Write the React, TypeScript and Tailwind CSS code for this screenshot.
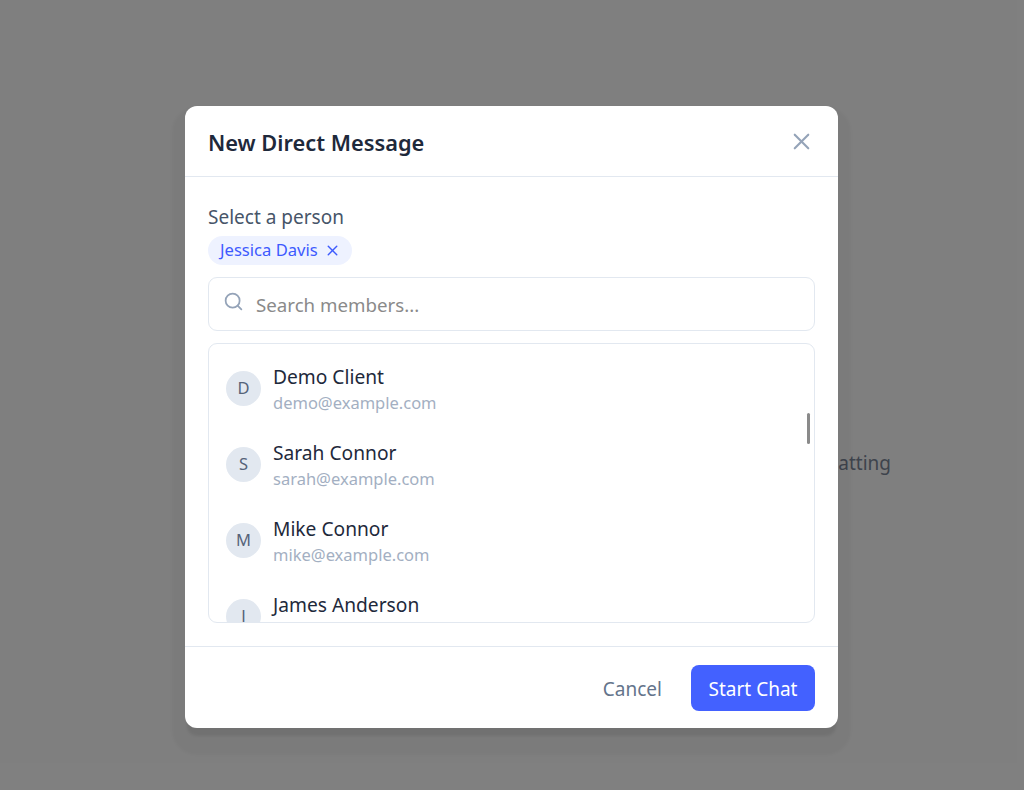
import React from 'react';
import { X, Search } from 'lucide-react';

const members = [
  { initial: 'D', name: 'Demo Client', email: 'demo@example.com' },
  { initial: 'S', name: 'Sarah Connor', email: 'sarah@example.com' },
  { initial: 'M', name: 'Mike Connor', email: 'mike@example.com' },
  { initial: 'J', name: 'James Anderson', email: 'james@example.com' },
];

const MemberRow = ({ initial, name, email }: { initial: string; name: string; email: string }) => (
  <div className="flex items-center gap-3 h-[76px] shrink-0 px-[17px]">
    <div className="w-[35px] h-[35px] rounded-full bg-[#e2e8f0] flex items-center justify-center text-[16.5px] text-[#566379] shrink-0">
      {initial}
    </div>
    <div className="flex flex-col pt-[3px]">
      <span className="text-[19.2px] leading-[26px] text-[#1e293b]">{name}</span>
      <span className="mt-[1px] text-[16.5px] leading-[24px] text-[#a3afc2]">{email}</span>
    </div>
  </div>
);

export default function App() {
  return (
    <div className="relative h-[790px] w-[1024px] overflow-hidden bg-white font-['Noto_Sans',sans-serif]">
      {/* page behind the dialog */}
      <div className="h-full flex items-center justify-end pr-[133px] pt-[136px]">
        <p className="text-[19px] text-[#7c8799]">Select a conversation to start chatting</p>
      </div>

      <div className="absolute inset-0 bg-black/50 flex items-start justify-center pt-[106px] pr-[1px]">
        <div className="w-[653px] h-[622px] bg-white rounded-[12px] flex flex-col shadow-[0_10px_3px_-2px_rgba(0,0,0,0.08),0_14px_3px_13px_rgba(0,0,0,0.03)]">
          <div className="h-[71px] shrink-0 flex items-center justify-between pl-[23px] pr-[24px] border-b border-[#e2e8f0]">
            <h2 className="text-[21.8px] font-semibold text-[#1e293b] pt-[4px]">New Direct Message</h2>
            <X className="w-[27px] h-[27px] -mr-[1px] text-[#94a3b8]" strokeWidth={1.9} />
          </div>

          <div className="flex-1 flex flex-col px-[23px] pt-[26px]">
            <label className="text-[19px] leading-[28px] text-[#475569]">Select a person</label>
            <div className="mt-[5px] self-start h-[29px] pl-[12px] pr-[11px] rounded-full bg-[#eef2ff] flex items-center gap-[6px] text-[16.6px] text-[#3d5afe]">
              Jessica Davis
              <X className="w-[17px] h-[17px]" strokeWidth={2} />
            </div>
            <div className="mt-[12px] h-[54px] shrink-0 rounded-[9px] border border-[#e2e8f0] flex items-center gap-[12px] pl-[14px]">
              <Search className="w-[21px] h-[21px] text-[#94a3b8] -mt-[5px]" strokeWidth={2} />
              <span className="text-[18.7px] text-[#8a8a8a] pt-[2px]">Search members...</span>
            </div>
            <div className="relative mt-[12px] h-[280px] shrink-0 rounded-[9px] border border-[#e2e8f0] overflow-hidden flex flex-col pt-[6px]">
              {members.map((m) => (
                <MemberRow key={m.email} {...m} />
              ))}
              <div className="absolute left-[598px] top-[69px] w-[3px] h-[31px] rounded-full bg-[#8a8a8a]" />
            </div>
          </div>

          <div className="h-[82px] shrink-0 border-t border-[#e2e8f0] flex items-center justify-end gap-[29px] px-[23px]">
            <button className="text-[19px] text-[#64748b] pt-[3px]">Cancel</button>
            <button className="w-[124px] h-[46px] mt-[1px] rounded-[8px] bg-[#4361ff] text-white text-[19px] pt-[2px]">Start Chat</button>
          </div>
        </div>
      </div>
    </div>
  );
}
